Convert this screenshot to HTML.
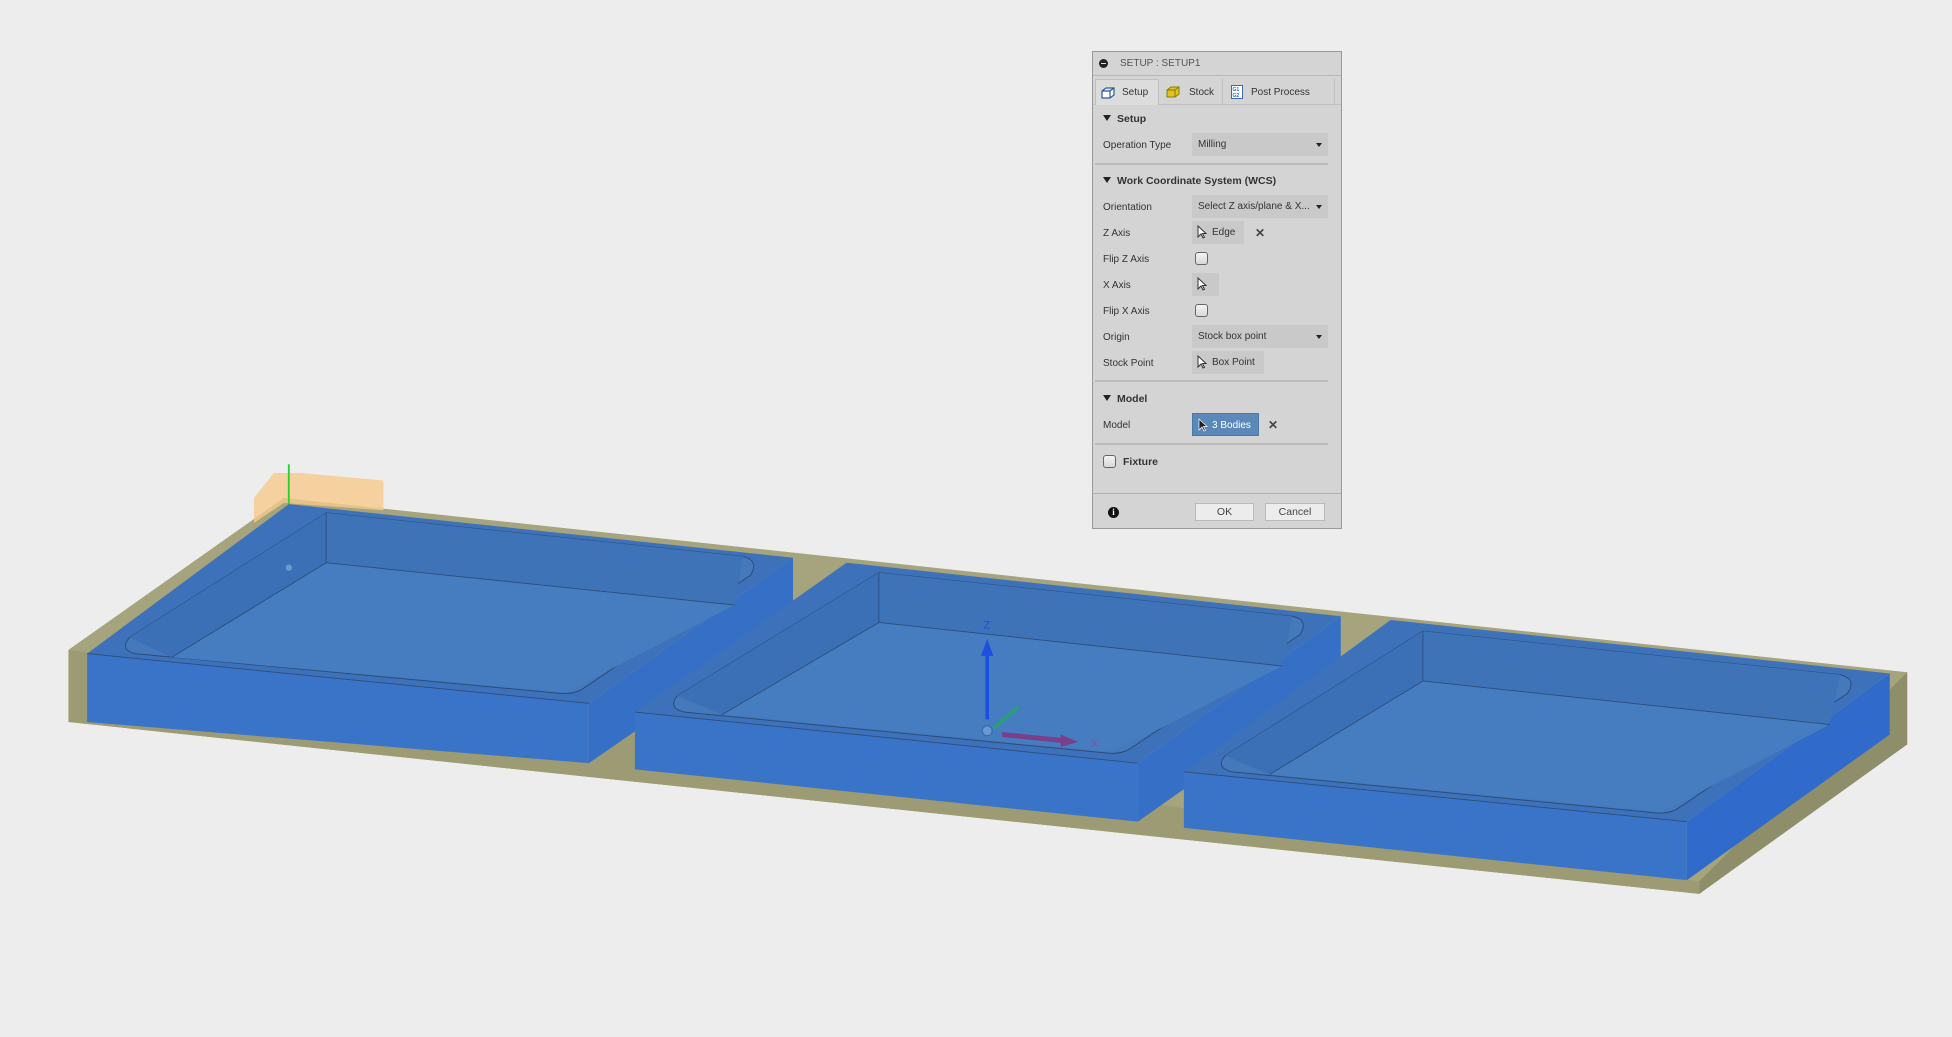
<!DOCTYPE html>
<html><head><meta charset="utf-8"><style>
*{margin:0;padding:0;box-sizing:border-box}
body{width:1952px;height:1037px;background:#ededed;overflow:hidden;position:relative;font-family:"Liberation Sans",sans-serif;font-size:10px;color:#333}
svg.scene{position:absolute;left:0;top:0}
.panel{position:absolute;left:1092px;top:51px;width:250px;height:478px;background:#d4d4d4;border:1px solid #9a9a9a}
.title{height:24px;border-bottom:1px solid #b8b8b8;display:flex;align-items:center;padding-left:6px;color:#555;font-size:10px}
.title i{display:inline-block;width:9px;height:9px;border-radius:50%;background:#222;margin-right:12px;position:relative}
.title i:after{content:"";position:absolute;left:2px;top:4px;width:5px;height:1px;background:#ddd}
.tabs{height:29px;border-bottom:1px solid #c0c0c0;position:relative}
.tab{position:absolute;top:3px;height:26px;display:flex;align-items:center;font-size:10px;color:#333;white-space:nowrap}
.tab.a{background:#dcdcdc;border:1px solid #c0c0c0;border-bottom:none}
.lbl{position:absolute;left:10px;font-size:10px;color:#333;white-space:nowrap}
.hdr{position:absolute;left:10px;font-weight:bold;font-size:10.5px;color:#333;white-space:nowrap}
.hdr:before{content:"";display:inline-block;border-left:4px solid transparent;border-right:4px solid transparent;border-top:6px solid #222;margin-right:6px;vertical-align:1px}
.dd{position:absolute;left:99px;width:136px;height:23px;background:#c9c9c9;font-size:10px;padding:6px 0 0 6px;color:#333;white-space:nowrap;overflow:hidden}
.dd:after{content:"";position:absolute;right:6px;top:10px;border-left:3px solid transparent;border-right:3px solid transparent;border-top:4px solid #222}
.sel{position:absolute;left:99px;height:23px;background:#c9c9c9;font-size:10px;padding:6px 6px 0 20px;color:#333;white-space:nowrap}
.sel svg{position:absolute;left:5px;top:4px}
.cb{position:absolute;left:102px;width:13px;height:13px;border:1px solid #666;border-radius:3px;background:linear-gradient(#f4f4f4,#d8d8d8)}
.sep{position:absolute;left:2px;width:233px;height:2px;background:#bdbdbd}
.x{position:absolute;font-size:12px;font-weight:bold;color:#444}
.btn{position:absolute;top:451px;height:18px;background:#ececec;border:1px solid #bbb;font-size:10.5px;color:#444;text-align:center;line-height:16px}
</style></head><body>
<svg class="scene" width="1952" height="1037" viewBox="0 0 1568 833">
<polygon points="55,522 228,400 1532,540 1532,598 1365,718 55,580" fill="#a5a47c"/>
<polygon points="55,522 55,580 1365,718 1365,708" fill="#9c9b73"/>
<polygon points="1365,708 1532,540 1532,598 1365,718" fill="#8f8e6a"/>
<polygon points="204,400 220,380 242,380 308,386 308,410 228,404 204,420" fill="#f5c98a" opacity="0.8"/>
<line x1="232" y1="373" x2="232" y2="405" stroke="#2bd12b" stroke-width="1.5"/>
<g>
<polygon points="232,405 637,448 473,565 70,525" fill="#3d72bb"/>
<polygon points="70,525 473,565 473,613 70,580" fill="#3a74c8"/>
<polygon points="473,565 637,448 637,500 473,613" fill="#3570c6"/>
<path d="M262,412 L597,447 Q610,450 603,462 L470,552 Q462,558 450,557 L108,525 Q96,522 104,512 Z" fill="#4479bc" stroke="#2c4c78" stroke-width="0.8"/>
<polygon points="262,412 597,447 590,486 262,452" fill="#3e73b8"/>
<polygon points="262,412 262,452 138,528 104,512" fill="#3b70b6"/>
<polygon points="262,452 590,486 455,556 138,528" fill="#467dc0"/>
<path d="M262,412 L262,452 L138,528 M262,452 L590,486" fill="none" stroke="#2c4c78" stroke-width="0.7"/>
<line x1="70" y1="525" x2="473" y2="565" stroke="#2c4c78" stroke-width="0.7"/>
</g>
<g>
<polygon points="680,452 1077,495 914,613 510,572" fill="#3d72bb"/>
<polygon points="510,572 914,613 914,660 510,618" fill="#3a74c8"/>
<polygon points="914,613 1077,495 1077,545 914,660" fill="#3570c6"/>
<path d="M706,460 L1038,495 Q1052,498 1044,510 L910,600 Q902,606 890,605 L550,572 Q536,569 544,559 Z" fill="#4479bc" stroke="#2c4c78" stroke-width="0.8"/>
<polygon points="706,460 1038,495 1030,535 706,500" fill="#3e73b8"/>
<polygon points="706,460 706,500 580,574 544,559" fill="#3b70b6"/>
<polygon points="706,500 1030,535 895,604 580,574" fill="#467dc0"/>
<path d="M706,460 L706,500 L580,574 M706,500 L1030,535" fill="none" stroke="#2c4c78" stroke-width="0.7"/>
<line x1="510" y1="572" x2="914" y2="613" stroke="#2c4c78" stroke-width="0.7"/>
</g>
<g>
<polygon points="1117,498 1518,541 1355,660 951,620" fill="#3d72bb"/>
<polygon points="951,620 1355,660 1355,707 951,665" fill="#3a74c8"/>
<polygon points="1355,660 1518,541 1518,590 1355,707" fill="#306bcc"/>
<path d="M1143,507 L1478,542 Q1492,545 1484,557 L1350,648 Q1342,654 1330,653 L990,620 Q976,617 984,607 Z" fill="#4479bc" stroke="#2c4c78" stroke-width="0.8"/>
<polygon points="1143,507 1478,542 1470,582 1143,547" fill="#3e73b8"/>
<polygon points="1143,507 1143,547 1020,622 984,607" fill="#3b70b6"/>
<polygon points="1143,547 1470,582 1335,652 1020,622" fill="#467dc0"/>
<path d="M1143,507 L1143,547 L1020,622 M1143,547 L1470,582" fill="none" stroke="#2c4c78" stroke-width="0.7"/>
<line x1="951" y1="620" x2="1355" y2="660" stroke="#2c4c78" stroke-width="0.7"/>
</g>
<line x1="793" y1="578" x2="793" y2="525" stroke="#1f4fe0" stroke-width="3"/>
<polygon points="788,527 798,527 793,513" fill="#1f4fe0"/>
<text x="790" y="505" font-size="9" fill="#1f4fe0" font-family="Liberation Sans">Z</text>
<line x1="798" y1="585" x2="818" y2="568" stroke="#2a9d7a" stroke-width="3"/>
<line x1="805" y1="590" x2="855" y2="595" stroke="#7a3f8a" stroke-width="4"/>
<polygon points="852,590 866,596 852,600" fill="#7a3f8a"/>
<text x="876" y="600" font-size="9" fill="#8a4f9a" font-family="Liberation Sans">X</text>
<circle cx="793" cy="587" r="4" fill="#6a9ad0" stroke="#3a6ab0"/>
<circle cx="232" cy="456" r="2.5" fill="#6a9ad0"/>
</svg>

<div class="panel">
 <div class="title"><i></i>SETUP : SETUP1</div>
 <div class="tabs">
  <div class="tab a" style="left:2px;width:64px;padding-left:4px">
   <svg width="16" height="14" viewBox="0 0 16 14"><path d="M2 5 L6 2 L14 2 L14 9 L10 12 L2 12 Z M2 5 L10 5 L14 2 M10 5 L10 12" fill="#fff" stroke="#2a5a9a" stroke-width="1.2"/></svg>
   <span style="margin-left:6px">Setup</span></div>
  <div class="tab" style="left:68px;width:62px;padding-left:4px;border-right:1px solid #c0c0c0">
   <svg width="16" height="14" viewBox="0 0 16 14"><path d="M2 5 L6 2 L14 2 L14 9 L10 12 L2 12 Z" fill="#e0c420" stroke="#8a7a10"/><path d="M2 5 L10 5 L14 2 M10 5 L10 12" fill="none" stroke="#8a7a10"/></svg>
   <span style="margin-left:8px">Stock</span></div>
  <div class="tab" style="left:132px;width:110px;padding-left:6px;border-right:1px solid #c0c0c0">
   <svg width="12" height="14" viewBox="0 0 12 14"><rect x="0.5" y="0.5" width="11" height="13" fill="#fff" stroke="#3a6ab0"/><text x="1.5" y="6" font-size="5" fill="#2a6ae0" font-family="Liberation Sans" font-weight="bold">G1</text><text x="1.5" y="12" font-size="5" fill="#2a6ae0" font-family="Liberation Sans" font-weight="bold">G2</text></svg>
   <span style="margin-left:8px">Post Process</span></div>
 </div>
 <div class="hdr" style="top:61px">Setup</div>
 <div class="lbl" style="top:88px">Operation Type</div>
 <div class="dd" style="top:81px">Milling</div>
 <div class="sep" style="top:111px"></div>
 <div class="hdr" style="top:123px">Work Coordinate System (WCS)</div>
 <div class="lbl" style="top:150px">Orientation</div>
 <div class="dd" style="top:143px;padding-right:14px">Select Z axis/plane &amp; X...</div>
 <div class="lbl" style="top:176px">Z Axis</div>
 <div class="sel" style="top:169px;width:52px"><svg width="10" height="14" viewBox="0 0 10 14"><path d="M1 1 L1 12 L4 9 L6 13 L7.5 12.3 L5.5 8.5 L9 8.5 Z" fill="#fff" stroke="#333"/></svg>Edge</div>
 <div class="x" style="left:162px;top:174px">✕</div>
 <div class="lbl" style="top:202px">Flip Z Axis</div>
 <div class="cb" style="top:200px"></div>
 <div class="lbl" style="top:228px">X Axis</div>
 <div class="sel" style="top:221px;width:27px"><svg width="10" height="14" viewBox="0 0 10 14"><path d="M1 1 L1 12 L4 9 L6 13 L7.5 12.3 L5.5 8.5 L9 8.5 Z" fill="#fff" stroke="#333"/></svg></div>
 <div class="lbl" style="top:254px">Flip X Axis</div>
 <div class="cb" style="top:252px"></div>
 <div class="lbl" style="top:280px">Origin</div>
 <div class="dd" style="top:273px">Stock box point</div>
 <div class="lbl" style="top:306px">Stock Point</div>
 <div class="sel" style="top:299px;width:72px"><svg width="10" height="14" viewBox="0 0 10 14"><path d="M1 1 L1 12 L4 9 L6 13 L7.5 12.3 L5.5 8.5 L9 8.5 Z" fill="#fff" stroke="#333"/></svg>Box Point</div>
 <div class="sep" style="top:328px"></div>
 <div class="hdr" style="top:341px">Model</div>
 <div class="lbl" style="top:368px">Model</div>
 <div class="sel" style="top:361px;width:67px;background:#5a88b8;color:#fff;border:1px solid #4a78a8;padding-left:19px"><svg width="10" height="14" viewBox="0 0 10 14"><path d="M1 1 L1 12 L4 9 L6 13 L7.5 12.3 L5.5 8.5 L9 8.5 Z" fill="#222" stroke="#fff" stroke-width="0.7"/></svg>3 Bodies</div>
 <div class="x" style="left:175px;top:366px">✕</div>
 <div class="sep" style="top:391px"></div>
 <div class="cb" style="left:10px;top:403px"></div>
 <div style="position:absolute;left:30px;top:404px;font-weight:bold;font-size:10.5px">Fixture</div>
 <div style="position:absolute;left:0;top:441px;width:248px;height:1px;background:#b0b0b0"></div>
 <div style="position:absolute;left:15px;top:455px;width:11px;height:11px;border-radius:50%;background:#111;color:#fff;font-size:9px;font-weight:bold;text-align:center;line-height:11px;font-family:'Liberation Serif',serif">i</div>
 <div class="btn" style="left:102px;width:59px">OK</div>
 <div class="btn" style="left:172px;width:60px">Cancel</div>
</div>
</body></html>
